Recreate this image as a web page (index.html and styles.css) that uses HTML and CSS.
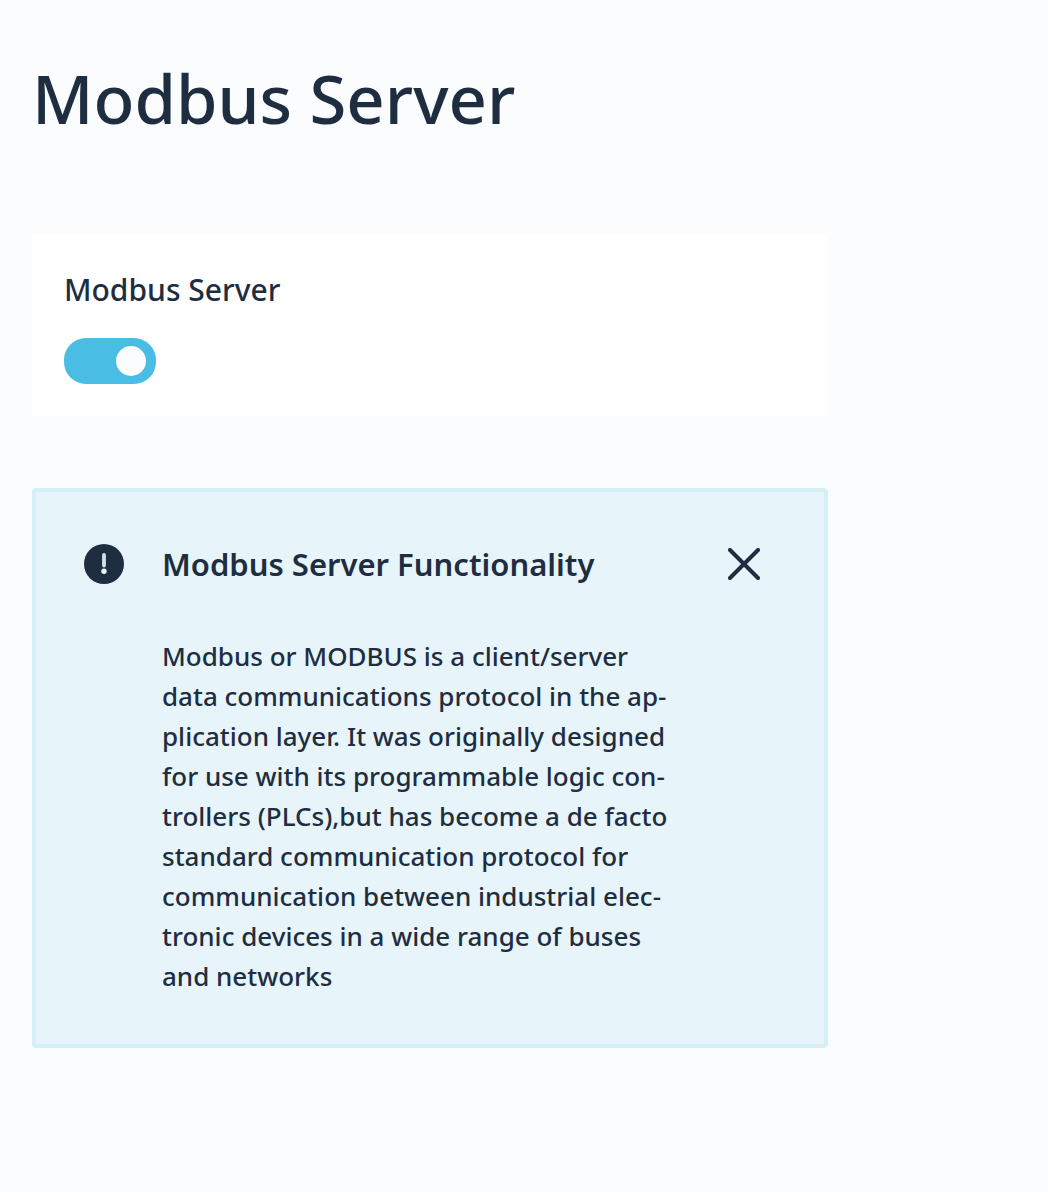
FILE: index.html
```
<!DOCTYPE html>
<html lang="en">
<head>
<meta charset="utf-8">
<title>Modbus Server</title>
<link rel="stylesheet" href="styles.css">
</head>
<body>
<main class="page">
  <h1 class="page-title">Modbus Server</h1>
  <section class="card">
    <label class="card-label" for="modbus-toggle">Modbus Server</label>
    <input class="toggle" id="modbus-toggle" type="checkbox" role="switch" checked>
  </section>
  <section class="notice">
    <svg class="notice-icon" viewBox="0 0 40 40" aria-hidden="true">
      <circle cx="20" cy="20" r="20" fill="#1f2d41"/>
      <path d="M20 11v10.500" stroke="#d3e0e7" stroke-width="3.800" stroke-linecap="round"/>
      <circle cx="20" cy="27.200" r="2.700" fill="#e7f5fb"/>
    </svg>
    <h2 class="notice-title">Modbus Server Functionality</h2>
    <button class="close" type="button" aria-label="Close">
      <svg class="close-icon" viewBox="0 0 32 32" aria-hidden="true">
        <path d="M2 2l28 28M30 2L2 30" stroke="#1f2d41" stroke-width="4" stroke-linecap="round"/>
      </svg>
    </button>
    <p class="notice-text">Modbus or MODBUS is a client/server data communications protocol in the ap&shy;plication layer. It was originally designed for use with its programmable logic con&shy;trollers (PLCs),but has become a de facto standard communication protocol for communication between industrial elec&shy;tronic devices in a wide range of buses and networks</p>
  </section>
</main>
</body>
</html>
```
FILE: styles.css
```
* { box-sizing: border-box; }
body {
  margin: 0;
  background: #fafcfe;
  color: #1f2d41;
  font-family: "Noto Sans", sans-serif;
}
.page {
  max-width: 860px;
  padding: 48px 32px;
}
.page-title {
  margin: 0 0 86px;
  font-size: 67px;
  line-height: 100px;
  font-weight: 500;
}
.card {
  display: flex;
  flex-direction: column;
  align-items: flex-start;
  gap: 24px;
  padding: 32px;
  background: #fff;
}
.card-label {
  font-size: 30px;
  line-height: 48px;
  font-weight: 500;
}
.toggle {
  appearance: none;
  display: flex;
  align-items: center;
  justify-content: flex-end;
  width: 92px;
  height: 46px;
  margin: 0;
  padding: 0 10px;
  border-radius: 22px;
  background: #49bde3;
}
.toggle::before {
  content: "";
  width: 30px;
  height: 30px;
  border-radius: 50%;
  background: #fafcfe;
}
.toggle:not(:checked) {
  justify-content: flex-start;
  background: #9aa8b5;
}
.notice {
  display: grid;
  grid-template-columns: 40px 1fr 32px;
  align-items: center;
  column-gap: 38px;
  row-gap: 48px;
  margin-top: 72px;
  padding: 48px 64px 48px 48px;
  border: 4px solid #d5f1f7;
  border-radius: 4px;
  background: #e7f5fb;
}
.notice-icon { width: 40px; height: 40px; }
.notice-title {
  margin: 0;
  font-size: 31px;
  line-height: 48px;
  font-weight: 600;
}
.close {
  display: flex;
  padding: 0;
  border: 0;
  background: none;
  cursor: pointer;
}
.close-icon { width: 32px; height: 32px; }
.notice-text {
  grid-column: 2;
  margin: 0;
  padding-right: 12px;
  font-size: 26px;
  line-height: 40px;
  font-weight: 500;
}
```
